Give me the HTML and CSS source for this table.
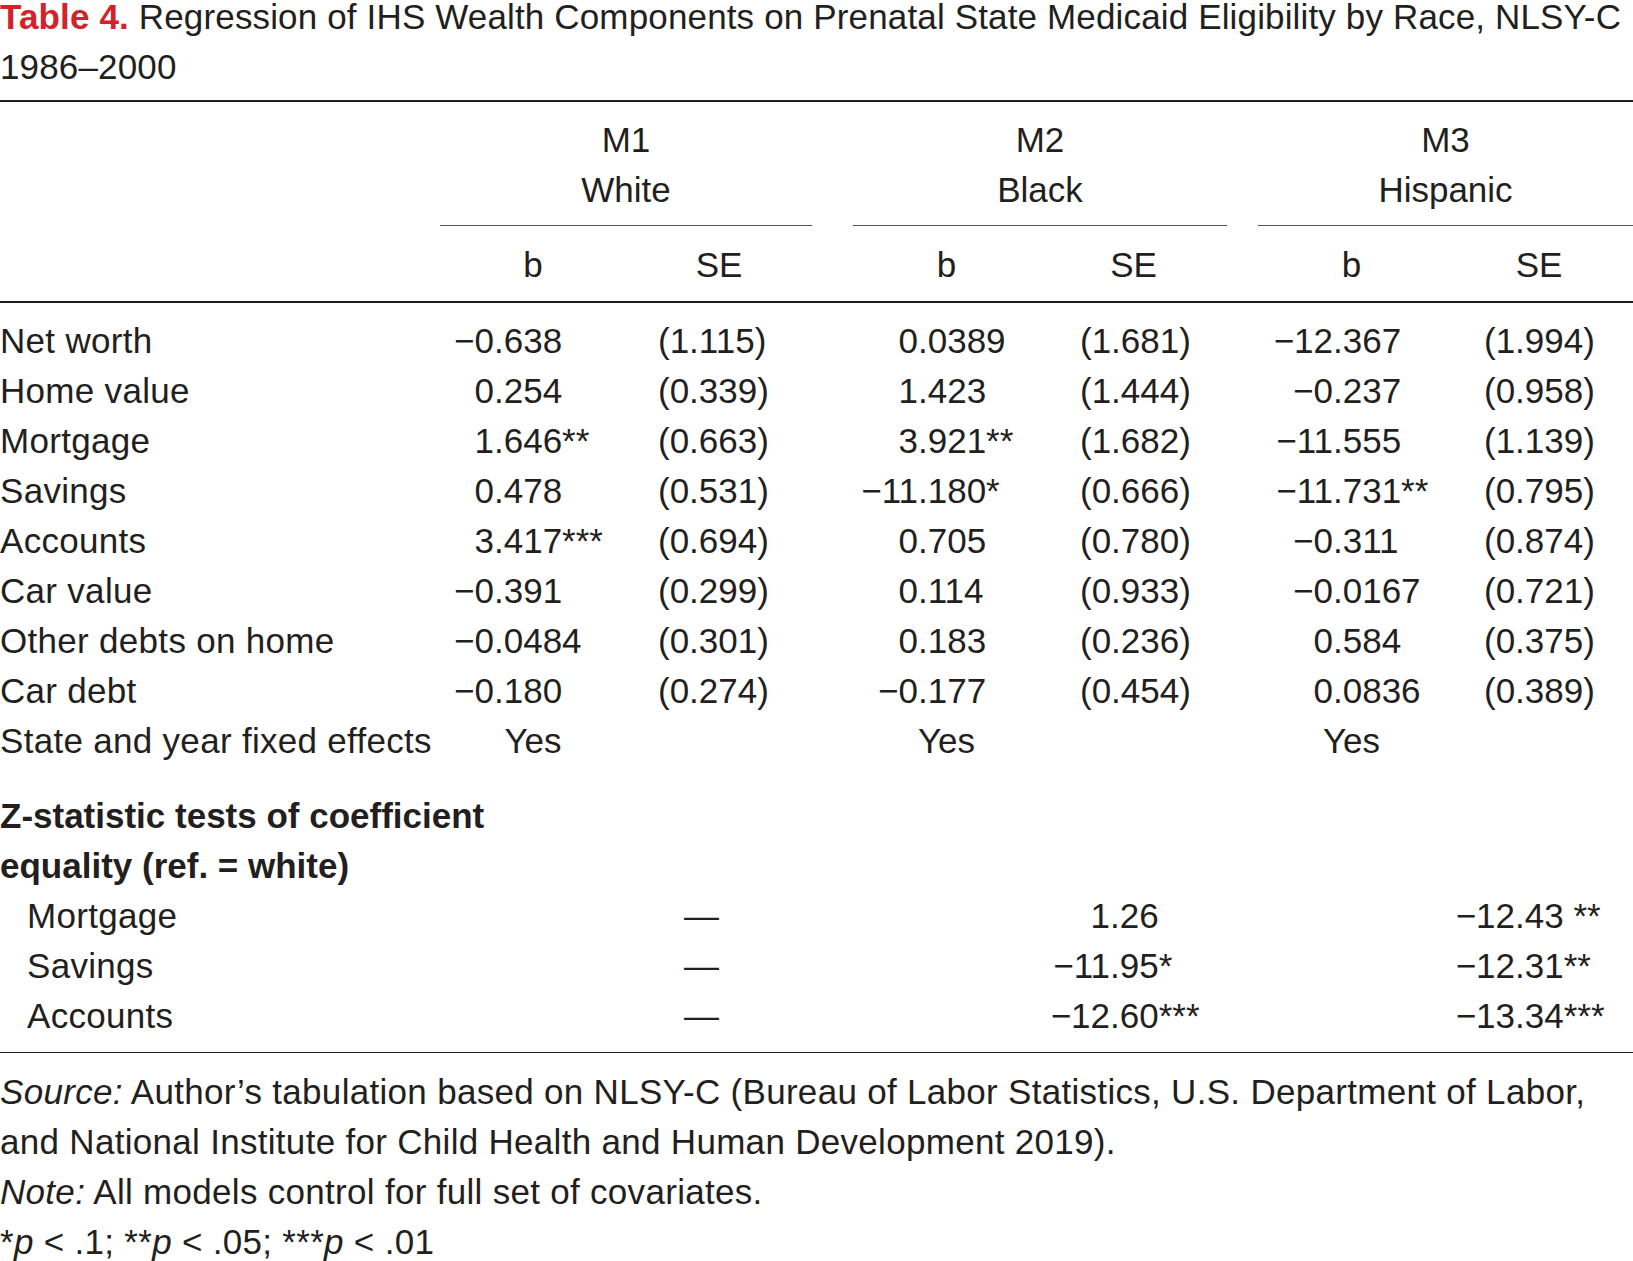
FILE: index.html
```html
<!DOCTYPE html>
<html lang="en">
<head>
<meta charset="utf-8">
<title>Table 4</title>
<link rel="stylesheet" href="styles.css">
</head>
<body>
<div class="page">
  <p class="title"><span class="tnum">Table 4.</span> Regression of IHS Wealth Components on Prenatal State Medicaid Eligibility by Race, NLSY-C 1986–2000</p>
  <table class="reg">
    <colgroup>
      <col class="c-label">
      <col class="c-sub"><col class="c-sub">
      <col class="c-gap1">
      <col class="c-sub2"><col class="c-sub2">
      <col class="c-gap2">
      <col class="c-sub2"><col class="c-sub3">
    </colgroup>
    <thead>
      <tr class="h1">
        <th></th>
        <th colspan="2" class="grp">M1<br>White</th>
        <th></th>
        <th colspan="2" class="grp">M2<br>Black</th>
        <th></th>
        <th colspan="2" class="grp">M3<br>Hispanic</th>
      </tr>
      <tr class="h2">
        <th></th>
        <th>b</th><th>SE</th>
        <th></th>
        <th>b</th><th>SE</th>
        <th></th>
        <th>b</th><th>SE</th>
      </tr>
    </thead>
    <tbody class="main">
      <tr class="first">
        <td class="lab">Net worth</td>
        <td class="b m1"><span class="i">−0</span>.638</td><td class="se s1">(1.115)</td><td></td>
        <td class="b m2"><span class="i">0</span>.0389</td><td class="se s2">(1.681)</td><td></td>
        <td class="b m3"><span class="i">−12</span>.367</td><td class="se s3">(1.994)</td>
      </tr>
      <tr>
        <td class="lab">Home value</td>
        <td class="b m1"><span class="i">0</span>.254</td><td class="se s1">(0.339)</td><td></td>
        <td class="b m2"><span class="i">1</span>.423</td><td class="se s2">(1.444)</td><td></td>
        <td class="b m3"><span class="i">−0</span>.237</td><td class="se s3">(0.958)</td>
      </tr>
      <tr>
        <td class="lab">Mortgage</td>
        <td class="b m1"><span class="i">1</span>.646**</td><td class="se s1">(0.663)</td><td></td>
        <td class="b m2"><span class="i">3</span>.921**</td><td class="se s2">(1.682)</td><td></td>
        <td class="b m3"><span class="i">−11</span>.555</td><td class="se s3">(1.139)</td>
      </tr>
      <tr>
        <td class="lab">Savings</td>
        <td class="b m1"><span class="i">0</span>.478</td><td class="se s1">(0.531)</td><td></td>
        <td class="b m2"><span class="i">−11</span>.180*</td><td class="se s2">(0.666)</td><td></td>
        <td class="b m3"><span class="i">−11</span>.731**</td><td class="se s3">(0.795)</td>
      </tr>
      <tr>
        <td class="lab">Accounts</td>
        <td class="b m1"><span class="i">3</span>.417***</td><td class="se s1">(0.694)</td><td></td>
        <td class="b m2"><span class="i">0</span>.705</td><td class="se s2">(0.780)</td><td></td>
        <td class="b m3"><span class="i">−0</span>.311</td><td class="se s3">(0.874)</td>
      </tr>
      <tr>
        <td class="lab">Car value</td>
        <td class="b m1"><span class="i">−0</span>.391</td><td class="se s1">(0.299)</td><td></td>
        <td class="b m2"><span class="i">0</span>.114</td><td class="se s2">(0.933)</td><td></td>
        <td class="b m3"><span class="i">−0</span>.0167</td><td class="se s3">(0.721)</td>
      </tr>
      <tr>
        <td class="lab">Other debts on home</td>
        <td class="b m1"><span class="i">−0</span>.0484</td><td class="se s1">(0.301)</td><td></td>
        <td class="b m2"><span class="i">0</span>.183</td><td class="se s2">(0.236)</td><td></td>
        <td class="b m3"><span class="i">0</span>.584</td><td class="se s3">(0.375)</td>
      </tr>
      <tr>
        <td class="lab">Car debt</td>
        <td class="b m1"><span class="i">−0</span>.180</td><td class="se s1">(0.274)</td><td></td>
        <td class="b m2"><span class="i">−0</span>.177</td><td class="se s2">(0.454)</td><td></td>
        <td class="b m3"><span class="i">0</span>.0836</td><td class="se s3">(0.389)</td>
      </tr>
      <tr>
        <td class="lab">State and year fixed effects</td>
        <td class="yes">Yes</td><td></td><td></td>
        <td class="yes">Yes</td><td></td><td></td>
        <td class="yes">Yes</td><td></td>
      </tr>
    </tbody>
    <tbody class="ztests">
      <tr class="zhead">
        <td colspan="9"><div class="zlabel">Z-statistic tests of coefficient equality (ref. = white)</div></td>
      </tr>
      <tr>
        <td class="lab ind">Mortgage</td>
        <td colspan="2" class="dash">—</td><td></td>
        <td colspan="2" class="z"><span class="i">1</span>.26</td><td></td>
        <td colspan="2" class="z"><span class="i">−12</span>.43 **</td>
      </tr>
      <tr>
        <td class="lab ind">Savings</td>
        <td colspan="2" class="dash">—</td><td></td>
        <td colspan="2" class="z"><span class="i">−11</span>.95*</td><td></td>
        <td colspan="2" class="z"><span class="i">−12</span>.31**</td>
      </tr>
      <tr class="last">
        <td class="lab ind">Accounts</td>
        <td colspan="2" class="dash">—</td><td></td>
        <td colspan="2" class="z"><span class="i">−12</span>.60***</td><td></td>
        <td colspan="2" class="z"><span class="i">−13</span>.34***</td>
      </tr>
    </tbody>
  </table>
  <div class="notes">
    <p><em>Source:</em> Author’s tabulation based on NLSY-C (Bureau of Labor Statistics, U.S. Department of Labor, and National Institute for Child Health and Human Development 2019).</p>
    <p><em>Note:</em> All models control for full set of covariates.</p>
    <p>*<em>p</em> &lt; .1; **<em>p</em> &lt; .05; ***<em>p</em> &lt; .01</p>
  </div>
</div>
</body>
</html>
```

FILE: styles.css
```css
html, body {
  margin: 0;
  padding: 0;
  background: #ffffff;
}

body {
  font-family: "Liberation Sans", Arial, sans-serif;
  font-size: 35px;
  color: #231f20;
}

.page {
  width: 1633px;
  overflow: hidden;
}

.title {
  margin: -8px 0 8px 0;
  line-height: 50px;
  letter-spacing: 0.15px;
}

.tnum {
  color: #d2232a;
  font-weight: bold;
}

.reg {
  width: 1633px;
  table-layout: fixed;
  border-collapse: collapse;
  border-top: 2px solid #231f20;
  line-height: 50px;
}

.c-label { width: 440px; }
.c-sub { width: 186px; }
.c-gap1 { width: 41px; }
.c-sub2 { width: 187px; }
.c-gap2 { width: 31px; }
.c-sub3 { width: 188px; }

.reg th,
.reg td {
  padding: 0;
  font-weight: normal;
  white-space: nowrap;
}

.reg th {
  text-align: center;
}

.h1 th {
  padding: 13px 0 10px;
}

.h1 th.grp {
  border-bottom: 1.5px solid #555;
}

.h2 th {
  padding: 14px 0 11px;
  border-bottom: 2px solid #231f20;
}

.main .first td {
  padding-top: 13px;
}

.lab {
  text-align: left;
  letter-spacing: 0.3px;
}

.ind {
  padding-left: 27px !important;
}

.b, .se, .z, .dash {
  text-align: left;
}

.i {
  display: inline-block;
  text-align: right;
}

.m1 .i { width: 54px; }
.m2 .i { width: 65px; }
.m3 .i { width: 75px; }

.s1 { padding-left: 32px !important; }
.s2 { padding-left: 40px !important; }
.s3 { padding-left: 39px !important; }

.yes {
  text-align: center;
}

.zhead td {
  padding-top: 25px !important;
}

.zlabel {
  width: 495px;
  white-space: normal;
  font-weight: bold;
}

.z .i { width: 257px; }

.dash {
  padding-left: 244px !important;
}

.ztests .last td {
  padding-bottom: 11px;
  border-bottom: 1.5px solid #231f20;
}

.notes {
  width: 1590px;
  padding-top: 14px;
  line-height: 50px;
  letter-spacing: 0.3px;
}

.notes p {
  margin: 0;
}
```
